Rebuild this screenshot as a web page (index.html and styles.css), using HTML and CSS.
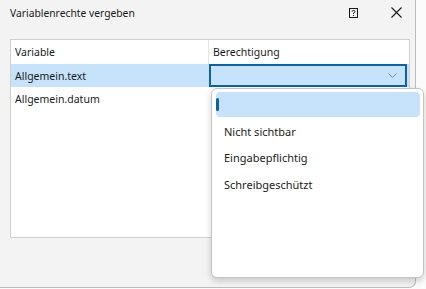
FILE: index.html
```html
<!DOCTYPE html>
<html>
<head>
    <title>Variablenrechte vergeben</title>
    <link rel="stylesheet" href="styles.css">
</head>
<body>
    <div class="window">
        <div class="titlebar">
            <span class="title">Variablenrechte vergeben</span>
            <span class="help-icon">
                <svg width="9" height="10" viewBox="0 0 9 10">
                    <rect x="0.5" y="0.5" width="8" height="9" fill="none" stroke="#1a1a1a" stroke-width="1"/>
                    <path d="M3 3.5 Q3 2.5 4.5 2.5 Q6 2.5 6 3.6 Q6 4.5 4.5 5 L4.5 6" fill="none" stroke="#1a1a1a" stroke-width="1"/>
                    <rect x="4" y="7" width="1" height="1" fill="#1a1a1a"/>
                </svg>
            </span>
            <span class="close-icon">
                <svg width="11" height="11" viewBox="0 0 11 11">
                    <path d="M0.5 0.5 L10.5 10.5 M10.5 0.5 L0.5 10.5" stroke="#1a1a1a" stroke-width="1.1"/>
                </svg>
            </span>
        </div>

        <div class="grid">
            <div class="row header">
                <div class="cell first">Variable</div>
                <div class="cell">Berechtigung</div>
            </div>
            <div class="row selected">
                <div class="cell first">Allgemein.text</div>
                <div class="cell edit">
                    <div class="combo">
                        <svg width="9" height="5" viewBox="0 0 9 5">
                            <path d="M0.5 0.5 L4.5 4.5 L8.5 0.5" fill="none" stroke="#7a8a9a" stroke-width="1"/>
                        </svg>
                    </div>
                </div>
            </div>
            <div class="row">
                <div class="cell first">Allgemein.datum</div>
                <div class="cell"></div>
            </div>
        </div>
    </div>

    <!-- open dropdown of the combo box -->
    <div class="dropdown">
        <div class="option current"><span class="marker"></span></div>
        <div class="option">Nicht sichtbar</div>
        <div class="option">Eingabepflichtig</div>
        <div class="option">Schreibgeschützt</div>
    </div>
</body>
</html>
```

FILE: styles.css
```css
body {
    margin: 0;
    background-color: #fbfbfb;
    font-family: "Noto Sans", "Open Sans", sans-serif;
    font-size: 10.5px;
    color: #1a1a1a;
    position: relative;
    width: 426px;
    height: 289px;
    overflow: hidden;
}

.window {
    width: 416px;
    height: 288px;
    box-sizing: border-box;
    background-color: #f3f3f3;
    border-right: 1px solid #bdbdbd;
    border-bottom: 1px solid #bdbdbd;
    border-bottom-right-radius: 7px;
    display: flex;
    flex-direction: column;
}

.titlebar {
    height: 25px;
    display: flex;
    align-items: center;
    padding-left: 10px;
}

.title {
    flex: 1;
    font-size: 10.3px;
}

.help-icon {
    display: flex;
    margin-right: 33px;
}

.close-icon {
    display: flex;
    margin-right: 13px;
}

.grid {
    margin: 14px 0 0 10px;
    width: 400px;
    height: 199px;
    box-sizing: border-box;
    background-color: #fff;
    border: 1px solid #cfcfcf;
}

.row {
    display: flex;
    height: 23px;
}

.row.header {
    height: 24px;
}

.cell {
    flex: 1;
    display: flex;
    align-items: center;
    padding-left: 4px;
}

.cell.first {
    flex: 0 0 198px;
    box-sizing: border-box;
}

.header .cell.first {
    border-right: 1px solid #e3e3e3;
}

.row.selected {
    background-color: #c6e3fb;
}

.cell.edit {
    padding-left: 0;
    align-items: stretch;
}

.combo {
    flex: 1;
    margin-right: 2px;
    border: 2px solid #0a62a8;
    background-color: #c6e3fb;
    display: flex;
    align-items: center;
    justify-content: flex-end;
    padding-right: 8px;
}

.dropdown {
    position: absolute;
    left: 211px;
    top: 88px;
    width: 213px;
    height: 190px;
    box-sizing: border-box;
    background-color: #fff;
    border: 1px solid #c4c4c4;
    border-radius: 6px;
    box-shadow: 0 3px 6px rgba(0, 0, 0, 0.18);
    padding: 3px 3px 0 4px;
}

.option {
    height: 26.5px;
    display: flex;
    align-items: center;
    padding-left: 8px;
    font-size: 11px;
}

.option.current {
    height: 25px;
    background-color: #c6e3fb;
    border-radius: 4px;
    padding-left: 0;
    margin-bottom: 1px;
}

.marker {
    width: 3px;
    height: 13px;
    border-radius: 2px;
    background-color: #0a62a8;
}
```
